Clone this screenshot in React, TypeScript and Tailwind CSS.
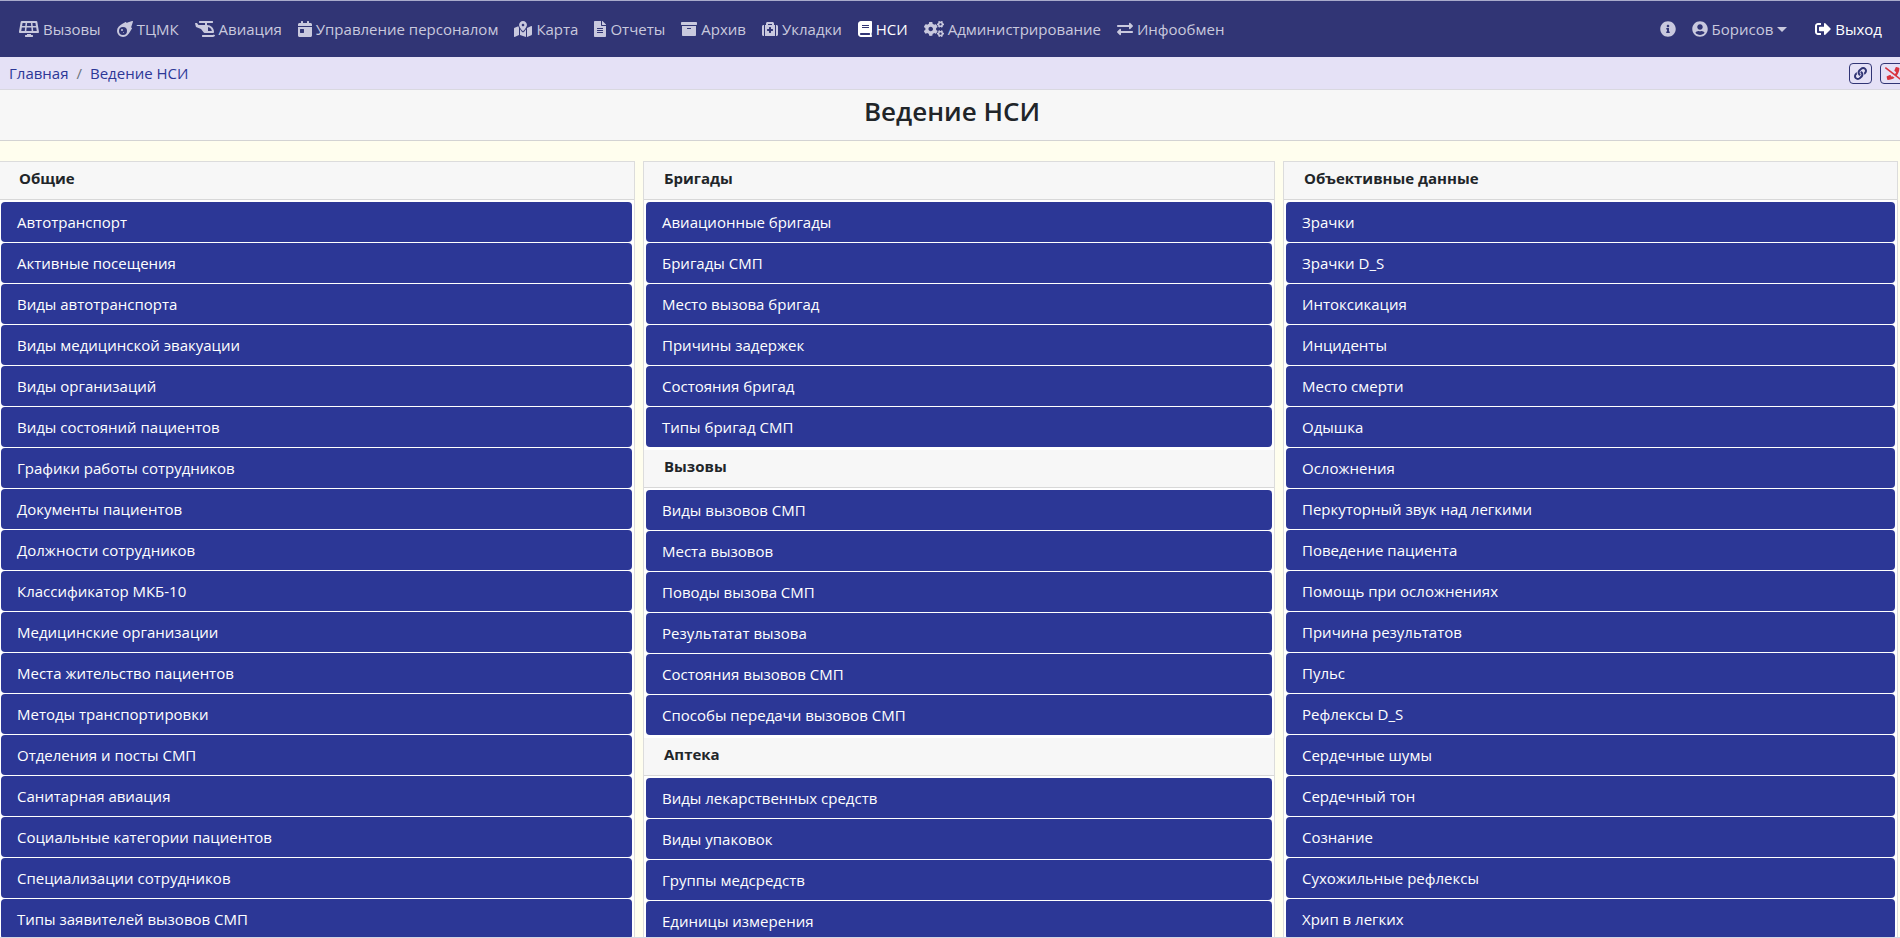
import type { ReactNode } from "react";
import type { IconType } from "react-icons";
import {
  FaArchive,
  FaBook,
  FaCalendarDay,
  FaCogs,
  FaExchangeAlt,
  FaFileAlt,
  FaHelicopter,
  FaInfoCircle,
  FaLink,
  FaMapMarkedAlt,
  FaMedkit,
  FaMeteor,
  FaPhoneSlash,
  FaSignOutAlt,
  FaSolarPanel,
  FaUserCircle,
} from "react-icons/fa";

type NavEntry = { label: string; icon: IconType; size: string; active?: boolean };
type Section = { title: string; items: string[] };

const nav: NavEntry[] = [
  { label: "Вызовы", icon: FaSolarPanel, size: "w-5" },
  { label: "ТЦМК", icon: FaMeteor, size: "w-4" },
  { label: "Авиация", icon: FaHelicopter, size: "w-5" },
  { label: "Управление персоналом", icon: FaCalendarDay, size: "w-[14px]" },
  { label: "Карта", icon: FaMapMarkedAlt, size: "w-[18px]" },
  { label: "Отчеты", icon: FaFileAlt, size: "w-3" },
  { label: "Архив", icon: FaArchive, size: "w-4" },
  { label: "Укладки", icon: FaMedkit, size: "w-4" },
  { label: "НСИ", icon: FaBook, size: "w-[14px]", active: true },
  { label: "Администрирование", icon: FaCogs, size: "w-5" },
  { label: "Инфообмен", icon: FaExchangeAlt, size: "w-4" },
];

const columns: Section[][] = [
  [
    {
      title: "Общие",
      items: [
        "Автотранспорт",
        "Активные посещения",
        "Виды автотранспорта",
        "Виды медицинской эвакуации",
        "Виды организаций",
        "Виды состояний пациентов",
        "Графики работы сотрудников",
        "Документы пациентов",
        "Должности сотрудников",
        "Классификатор МКБ-10",
        "Медицинские организации",
        "Места жительство пациентов",
        "Методы транспортировки",
        "Отделения и посты СМП",
        "Санитарная авиация",
        "Социальные категории пациентов",
        "Специализации сотрудников",
        "Типы заявителей вызовов СМП",
      ],
    },
  ],
  [
    {
      title: "Бригады",
      items: [
        "Авиационные бригады",
        "Бригады СМП",
        "Место вызова бригад",
        "Причины задержек",
        "Состояния бригад",
        "Типы бригад СМП",
      ],
    },
    {
      title: "Вызовы",
      items: [
        "Виды вызовов СМП",
        "Места вызовов",
        "Поводы вызова СМП",
        "Результатат вызова",
        "Состояния вызовов СМП",
        "Способы передачи вызовов СМП",
      ],
    },
    {
      title: "Аптека",
      items: ["Виды лекарственных средств", "Виды упаковок", "Группы медсредств", "Единицы измерения"],
    },
  ],
  [
    {
      title: "Объективные данные",
      items: [
        "Зрачки",
        "Зрачки D_S",
        "Интоксикация",
        "Инциденты",
        "Место смерти",
        "Одышка",
        "Осложнения",
        "Перкуторный звук над легкими",
        "Поведение пациента",
        "Помощь при осложнениях",
        "Причина результатов",
        "Пульс",
        "Рефлексы D_S",
        "Сердечные шумы",
        "Сердечный тон",
        "Сознание",
        "Сухожильные рефлексы",
        "Хрип в легких",
      ],
    },
  ],
];

function NavLink({ label, icon: Icon, size, active }: NavEntry) {
  return (
    <a
      href="#"
      aria-current={active ? "page" : undefined}
      className={`flex items-center gap-1 px-2 whitespace-nowrap ${active ? "text-white" : "text-[#c9c9de]"}`}
    >
      <Icon className={`h-4 shrink-0 ${size}`} />
      {label}
    </a>
  );
}

function ToolButton({ label, children }: { label: string; children: ReactNode }) {
  return (
    <button
      type="button"
      aria-label={label}
      className="flex h-[21px] shrink-0 items-center justify-center rounded border border-[#313575] px-1 text-[#313575]"
    >
      {children}
    </button>
  );
}

function Card({ sections }: { sections: Section[] }) {
  return (
    <div className="min-w-0 border-x border-t border-[#dcdcdc] bg-white">
      {sections.map((section) => (
        <section key={section.title}>
          <h2 className="border-b border-[#d8d8d8] bg-[#f7f7f7] px-5 pt-1 pb-[9px] leading-6 font-bold text-[#212529]">
            {section.title}
          </h2>
          <ul className="p-[2px]">
            {section.items.map((item) => (
              <li key={item} className="mb-px">
                <a href="#" className="block h-10 truncate rounded bg-[#2c3796] px-4 leading-10 text-white">
                  {item}
                </a>
              </li>
            ))}
          </ul>
        </section>
      ))}
    </div>
  );
}

export default function App() {
  return (
    <div className="flex h-screen flex-col overflow-hidden border-b border-[#d5d6e2] bg-[#fffeee] font-['Open_Sans','Noto_Sans',sans-serif] text-[15px]">
      <header className="flex h-[57px] shrink-0 items-center justify-between border-t border-[#a9abcb] bg-[#313575] pr-[10px] pl-[11px]">
        <nav className="flex">
          {nav.map((entry) => (
            <NavLink key={entry.label} {...entry} />
          ))}
        </nav>
        <div className="flex items-center">
          <a href="#" aria-label="Информация" className="px-2 text-[#c9c9de]">
            <FaInfoCircle className="size-4" />
          </a>
          <button type="button" className="flex items-center gap-1 px-2 text-[#c9c9de]">
            <FaUserCircle className="size-4" />
            Борисов
            <span className="border-x-[5px] border-t-[5px] border-x-transparent border-t-current" />
          </button>
          <a href="#" className="ml-3 flex items-center gap-1 px-2 text-white">
            <FaSignOutAlt className="size-4" />
            Выход
          </a>
        </div>
      </header>

      <div className="flex h-[33px] shrink-0 items-center justify-between border-b border-[#d9d8e0] bg-[#e5e1f6] pl-[9px]">
        <nav aria-label="Навигационная цепочка" className="flex gap-2 text-[#2c3796]">
          <a href="#">Главная</a>
          <span className="text-[#6c757d]">/</span>
          <a href="#">Ведение НСИ</a>
        </nav>
        <div className="-mr-[6px] flex gap-2">
          <ToolButton label="Ссылка">
            <FaLink className="size-[13px]" />
          </ToolButton>
          <ToolButton label="Звонки отключены">
            <FaPhoneSlash className="h-[13px] w-4 text-[#d9343f]" />
          </ToolButton>
        </div>
      </div>

      <h1 className="h-[51px] shrink-0 border-b border-[#d3d3d3] bg-[#f7f7f7] pt-[3px] pl-1 text-center text-[26px] leading-9 font-semibold text-[#212529]">
        Ведение НСИ
      </h1>

      <main className="-ml-[2px] mt-5 grid min-h-0 flex-1 grid-cols-[637fr_632fr_615fr] gap-2 pr-[2px]">
        {columns.map((sections) => (
          <Card key={sections[0].title} sections={sections} />
        ))}
      </main>
    </div>
  );
}
